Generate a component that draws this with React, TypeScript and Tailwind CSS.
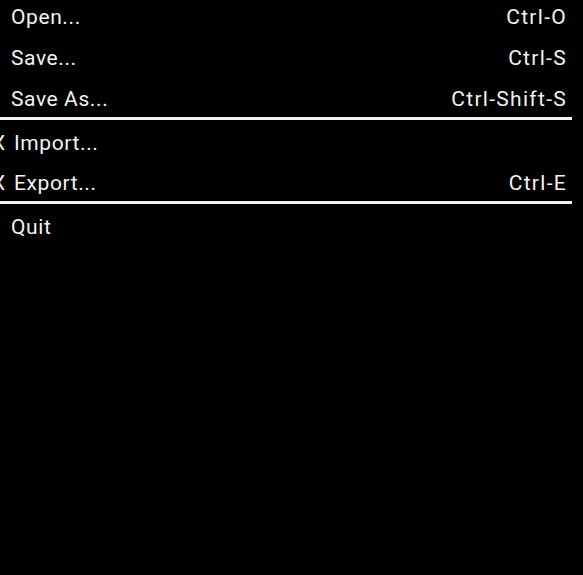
const font = { fontFamily: "Roboto, 'Liberation Sans', sans-serif" }

type Item = { label: string; shortcut?: string; mark?: boolean; short?: boolean }

function Row({ label, shortcut, mark, short }: Item) {
  return (
    <div
      className={`flex items-center pt-[6px] pl-[11px] pr-[17px] text-[21px] text-[#f2f2f2] ${short ? "h-[40px]" : "h-[41px]"}`}
    >
      <span className="flex-1 whitespace-nowrap tracking-[0.6px]">
        {mark && <span className="ml-[-19px] inline-block w-[22px]">X</span>}
        {label}
      </span>
      {shortcut && <span className="whitespace-nowrap tracking-[1.3px] mr-[-1px]">{shortcut}</span>}
    </div>
  )
}

function Sep() {
  return <div className="mr-[11px] h-[3px] bg-[#f2f2f2]" />
}

export default function App() {
  return (
    <div className="h-[575px] w-[583px] overflow-hidden bg-black" style={font}>
      <div className="mt-[-6px]">
        <Row label="Open..." shortcut="Ctrl-O" />
        <Row label="Save..." shortcut="Ctrl-S" />
        <Row label="Save As..." shortcut="Ctrl-Shift-S" />
        <Sep />
        <Row label="Import..." mark />
        <Row label="Export..." shortcut="Ctrl-E" mark short />
        <Sep />
        <Row label="Quit" />
      </div>
    </div>
  )
}
